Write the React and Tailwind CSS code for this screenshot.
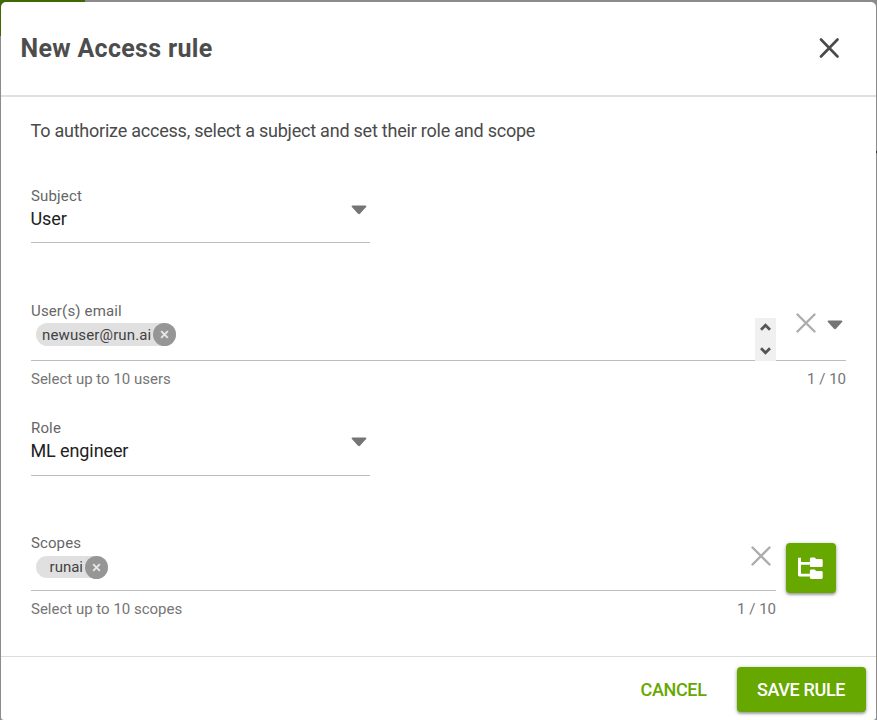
import React from "react";

function Cross({ className, width = 2.4 }) {
  return (
    <svg viewBox="0 0 20 20" className={className} fill="none" stroke="currentColor" strokeWidth={width} strokeLinecap="round">
      <path d="M1.5 1.5 18.5 18.5M18.5 1.5 1.5 18.5" />
    </svg>
  );
}

function Caret() {
  return (
    <svg viewBox="0 0 16 10" className="h-[10px] w-4 shrink-0" fill="#757575">
      <path d="M1.6 0.5h12.8c1 0 1.3.9.7 1.6L9.2 8.6c-.8.8-1.6.8-2.4 0L.9 2.1C.3 1.4.6.5 1.6.5z" />
    </svg>
  );
}

function Chip({ label, className, labelClassName = "" }) {
  return (
    <div className={`flex items-center justify-end rounded-full bg-[#e0e0e0] text-[15px] leading-[23px] text-[#424242] ${className}`}>
      <span className={`whitespace-nowrap ${labelClassName}`}>{label}</span>
      <span className="ml-[2px] flex size-[23px] shrink-0 items-center justify-center rounded-full bg-[#969696]">
        <svg viewBox="0 0 10 10" className="size-[9px]" fill="none" stroke="#e6e6e6" strokeWidth="2.2">
          <path d="M1.3 1.3l7.4 7.4M8.7 1.3L1.3 8.7" />
        </svg>
      </span>
    </div>
  );
}

function SelectField({ label, value, className }) {
  return (
    <div className={`flex w-[339px] justify-between border-b border-[#bdbdbd] ${className}`}>
      <div>
        <div className="text-[15px] leading-[18px] tracking-[0.15px] text-[#666]">{label}</div>
        <div className="-ml-[0.5px] mt-[2px] text-[18px] leading-6 tracking-[-0.1px] text-[#212121]">{value}</div>
      </div>
      <div className="mr-[3px] mt-[18px]">
        <Caret />
      </div>
    </div>
  );
}

function Hint({ text, count }) {
  return (
    <div className="mt-[9px] flex justify-between text-[15px] leading-[18px] text-[#757575]">
      <span>{text}</span>
      <span>{count}</span>
    </div>
  );
}

export default function App() {
  return (
    <div className="relative h-[720px] w-[877px] overflow-hidden bg-[#8c8a8a] px-px pt-[2px] font-[Roboto,sans-serif]">
      <div className="absolute left-0 top-0 h-[36px] w-[85px] bg-[#3f6900]" />
      <div className="absolute right-0 top-[151px] h-[2px] w-px bg-[#333]" />
      <div className="relative flex h-[718px] flex-col rounded-t-[5px] rounded-b-[3px] bg-white">
        <header className="flex h-[95px] shrink-0 items-center justify-between border-b-2 border-[#e0e0e0] pl-[19.5px] pr-[36px]">
          <h1 className="text-[25px] font-bold leading-8 tracking-[0.32px] text-[#4d4d4d]">New Access rule</h1>
          <svg viewBox="0 0 21 21" className="mb-px size-[21px]" fill="none" stroke="#4a4a4d" strokeWidth="2.6" strokeLinecap="round">
            <path d="M2 1.5 18.500 18.500M18.500 1.500 2 18.500" />
          </svg>
        </header>

        <main className="h-[559px] shrink-0 pl-[30px] pr-[30px] pt-[22px]">
          <p className="-ml-[0.5px] text-[18px] leading-6 tracking-[-0.225px] text-[#4a4a4a]">
            To authorize access, select a subject and set their role and scope
          </p>

          <SelectField label="Subject" value="User" className="mt-[44px] h-[56px]" />

          <div className="mt-[59px]">
            <div className="flex h-[59px] border-b border-[#bdbdbd]">
              <div className="grow">
                <div className="text-[15px] leading-[18px] tracking-[0.15px] text-[#666]">User(s) email</div>
                <Chip label="newuser@run.ai" className="ml-[5px] mt-[3px] h-[23px] w-[140.4px] tracking-[0.14px]" labelClassName="pt-[2px]" />
              </div>
              <div className="-mb-px mt-4 flex w-[21px] flex-col items-center justify-between bg-[#f0f0f0] pb-[6px] pt-[5px]">
                <svg viewBox="0 0 11 8" className="h-2 w-[11px]" fill="none" stroke="#555" strokeWidth="2.7">
                  <path d="M1 6.8 5.5 2.2 10 6.8" />
                </svg>
                <svg viewBox="0 0 11 8" className="h-2 w-[11px]" fill="none" stroke="#555" strokeWidth="2.7">
                  <path d="M1 1.2 5.5 5.8 10 1.2" />
                </svg>
              </div>
              <Cross className="ml-5 mt-[11px] size-5 text-[#adadad]" />
              <div className="ml-[11px] mr-[3px] mt-[18px]">
                <Caret />
              </div>
            </div>
            <Hint text="Select up to 10 users" count="1 / 10" />
          </div>

          <SelectField label="Role" value="ML engineer" className="mt-[31px] h-[57px]" />

          <div className="mt-[58px] flex">
            <div className="w-[745px]">
              <div className="flex h-[57px] justify-between border-b border-[#bdbdbd]">
                <div>
                  <div className="text-[15px] leading-[18px] tracking-[0.1px] text-[#666]">Scopes</div>
                  <Chip label="runai" className="ml-[5px] mt-[4px] h-[22px] w-[72px]" />
                </div>
                <Cross className="mr-[5px] mt-3 size-5 text-[#adadad]" />
              </div>
              <Hint text="Select up to 10 scopes" count="1 / 10" />
            </div>
            <button className="ml-[10px] mt-[9px] flex size-[50px] items-center justify-center rounded-[4px] bg-[#66a800] shadow-[0_1px_4px_rgba(0,0,0,0.3),0_2px_2px_rgba(0,0,0,0.2)]">
              <svg viewBox="0 0 26 24" className="mr-[2px] h-6 w-[26px]" fill="#fff">
                <path d="M1 1.700h3v4.300h8.900v2.800H4v8.900h8.900v2.800H2.400c-.8 0-1.400-.6-1.400-1.400z" />
                <path d="M14.200 1.500h3.500l1.400 1.600h5.200c.8 0 1.400.6 1.400 1.300v5.300c0 .8-.6 1.400-1.400 1.400H14.200c-.7 0-1.300-.6-1.300-1.400V2.900c0-.8.6-1.400 1.300-1.400z" />
                <path d="M14.200 13.400h3.500l1.400 1.600h5.200c.8 0 1.400.6 1.400 1.300v5.300c0 .8-.6 1.400-1.400 1.400H14.200c-.7 0-1.300-.6-1.300-1.400v-6.800c0-.8.6-1.400 1.300-1.400z" />
              </svg>
            </button>
          </div>
        </main>

        <footer className="flex grow items-start justify-end border-t border-[#dcdcdc] pr-[10px] pt-[10px]">
          <button className="mr-[30.5px] h-[45px] text-[18px] font-medium tracking-[-0.35px] text-[#66a800]">CANCEL</button>
          <button className="h-[45px] w-[129px] rounded-[4px] bg-[#66a800] pr-px text-[18px] font-medium tracking-[-0.35px] text-white shadow-[0_1px_4px_rgba(0,0,0,0.3),0_2px_2px_rgba(0,0,0,0.2)]">
            SAVE RULE
          </button>
        </footer>
      </div>
    </div>
  );
}
